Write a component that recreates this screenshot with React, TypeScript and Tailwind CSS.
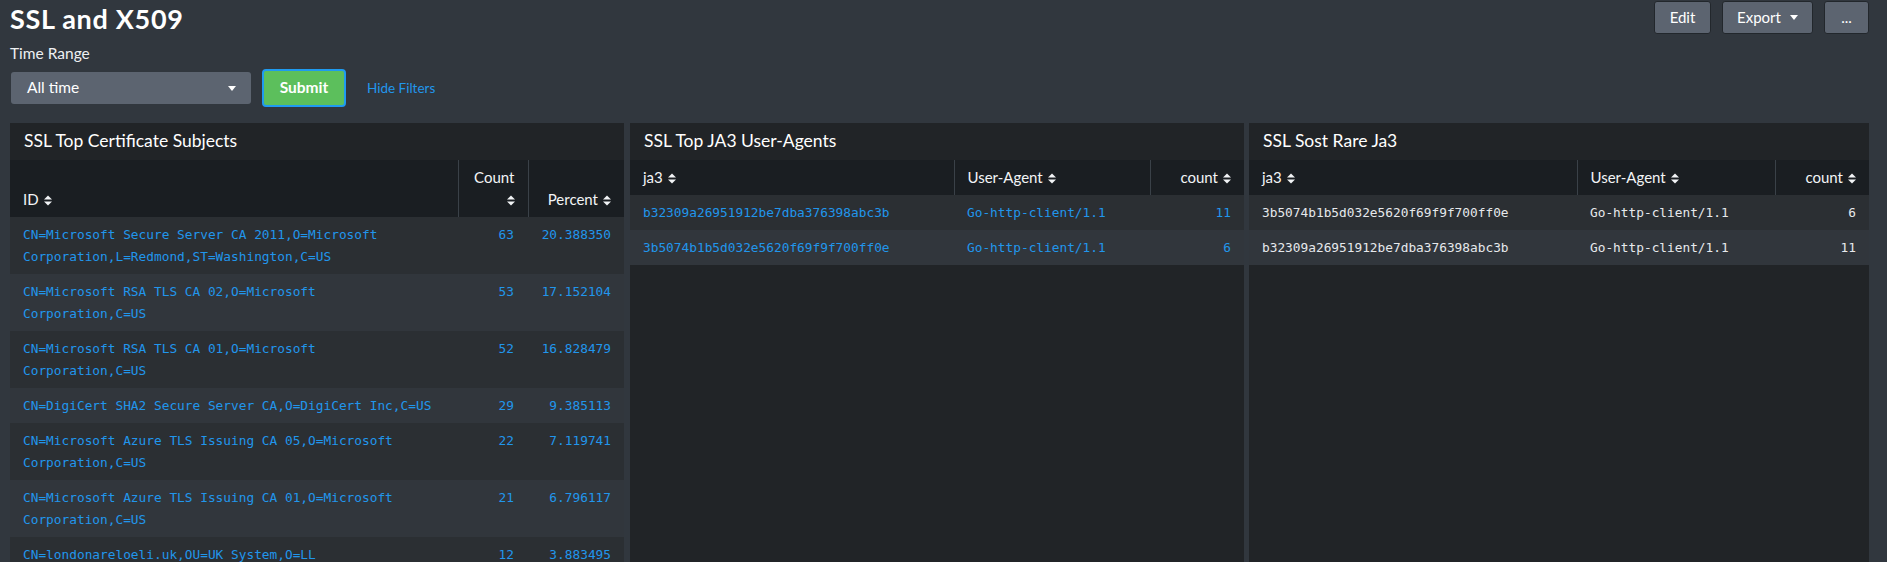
import React from "react";

const SortIcon = () => (
  <svg width="8" height="11" viewBox="0 0 8 11" className="ml-[5px] inline-block align-[-1px]">
    <path d="M0 4.5 L4 0.5 L8 4.5 Z" fill="currentColor" />
    <path d="M0 6.5 L8 6.5 L4 10.5 Z" fill="currentColor" />
  </svg>
);

const Caret = () => (
  <svg width="8" height="5" viewBox="0 0 8 5" className="inline-block">
    <path d="M0 0 L8 0 L4 5 Z" fill="currentColor" />
  </svg>
);

const certRows = [
  ["CN=Microsoft Secure Server CA 2011,O=Microsoft Corporation,L=Redmond,ST=Washington,C=US", "63", "20.388350"],
  ["CN=Microsoft RSA TLS CA 02,O=Microsoft Corporation,C=US", "53", "17.152104"],
  ["CN=Microsoft RSA TLS CA 01,O=Microsoft Corporation,C=US", "52", "16.828479"],
  ["CN=DigiCert SHA2 Secure Server CA,O=DigiCert Inc,C=US", "29", "9.385113"],
  ["CN=Microsoft Azure TLS Issuing CA 05,O=Microsoft Corporation,C=US", "22", "7.119741"],
  ["CN=Microsoft Azure TLS Issuing CA 01,O=Microsoft Corporation,C=US", "21", "6.796117"],
  ["CN=londonareloeli.uk,OU=UK System,O=LL", "12", "3.883495"],
];

const topJa3 = [
  ["b32309a26951912be7dba376398abc3b", "Go-http-client/1.1", "11"],
  ["3b5074b1b5d032e5620f69f9f700ff0e", "Go-http-client/1.1", "6"],
];

const rareJa3 = [
  ["3b5074b1b5d032e5620f69f9f700ff0e", "Go-http-client/1.1", "6"],
  ["b32309a26951912be7dba376398abc3b", "Go-http-client/1.1", "11"],
];

const th = "bg-[#1a1e22] px-[13px] pt-[6px] pb-[7px] align-bottom text-[15px] font-normal leading-[22px] text-[#f2f4f6]";
const td = "px-[13px] pt-[7px] pb-[6px] align-top font-['DejaVu_Sans_Mono',monospace] text-[12.8px] leading-[22px]";

function Panel({ title, className, children }: { title: string; className?: string; children: React.ReactNode }) {
  return (
    <div className={`flex flex-col overflow-hidden bg-[#212427] ${className ?? ""}`}>
      <div className="flex h-[37px] shrink-0 items-center px-[14px] text-[17.5px] text-white">{title}</div>
      {children}
    </div>
  );
}

function Ja3Table({ rows, widths, link }: { rows: string[][]; widths: number[]; link: boolean }) {
  const color = link ? "text-[#2196ec]" : "text-[#e6e9ec]";
  return (
    <table className="w-full table-fixed border-collapse">
      <colgroup>
        <col style={{ width: widths[0] }} />
        <col style={{ width: widths[1] }} />
        <col style={{ width: widths[2] }} />
      </colgroup>
      <thead>
        <tr>
          <th className={`${th} text-left`}>
            ja3<SortIcon />
          </th>
          <th className={`${th} border-l border-[#3a4148] text-left`}>
            User-Agent<SortIcon />
          </th>
          <th className={`${th} border-l border-[#3a4148] text-right`}>
            count<SortIcon />
          </th>
        </tr>
      </thead>
      <tbody>
        {rows.map((r, i) => (
          <tr key={i} className={i % 2 === 0 ? "bg-[#2b2f33]" : "bg-[#31363c]"}>
            <td className={`${td} ${color}`}>{r[0]}</td>
            <td className={`${td} ${color}`}>{r[1]}</td>
            <td className={`${td} ${color} text-right`}>{r[2]}</td>
          </tr>
        ))}
      </tbody>
    </table>
  );
}

export default function App() {
  return (
    <div className="flex h-[562px] flex-col overflow-hidden bg-[#31373e] pl-[10px] pr-[18px] font-['Lato','Open_Sans',sans-serif] text-white">
      <div className="flex items-start justify-between">
        <h1 className="pt-[3px] text-[27px] font-bold leading-[32px] tracking-[0.7px]">SSL and X509</h1>
        <div className="flex gap-[11px] pt-[1px]">
          <button className="h-[33px] w-[57px] rounded-[3px] border border-[#22272c] bg-[#5c6470] text-[15px] text-white">
            Edit
          </button>
          <button className="flex h-[33px] w-[91px] items-center justify-center gap-[9px] rounded-[3px] border border-[#22272c] bg-[#5c6470] text-[15px] text-white">
            Export <Caret />
          </button>
          <button className="h-[33px] w-[45px] rounded-[3px] border border-[#22272c] bg-[#5c6470] text-[15px] leading-none text-white">
            ...
          </button>
        </div>
      </div>

      <div className="mt-[8px] text-[15.5px] leading-[20px] text-[#eef0f2]">Time Range</div>

      <div className="mt-[6px] flex h-[38px] items-center">
        <div className="ml-[1px] flex h-[32px] w-[240px] items-center justify-between rounded-[3px] bg-[#5c6470] pl-[16px] pr-[15px] text-[15.5px] text-white">
          <span>All time</span>
          <Caret />
        </div>
        <button className="ml-[11px] h-[38px] w-[84px] rounded-[4px] border-2 border-[#1f9bf0] bg-[#5cbf5c] text-[15.5px] font-bold text-white">
          Submit
        </button>
        <span className="ml-[21px] text-[13.5px] text-[#2196ec]">Hide Filters</span>
      </div>

      <div className="mt-[16px] flex min-h-0 flex-1">
        <Panel title="SSL Top Certificate Subjects" className="w-[614px] shrink-0">
          <table className="w-full table-fixed border-collapse">
            <colgroup>
              <col style={{ width: 448 }} />
              <col style={{ width: 70 }} />
              <col style={{ width: 96 }} />
            </colgroup>
            <thead>
              <tr>
                <th className={`${th} text-left`}>
                  ID<SortIcon />
                </th>
                <th className={`${th} border-l border-[#3a4148] text-right`}>
                  Count<SortIcon />
                </th>
                <th className={`${th} border-l border-[#3a4148] text-right`}>
                  Percent<SortIcon />
                </th>
              </tr>
            </thead>
            <tbody>
              {certRows.map((r, i) => (
                <tr key={i} className={i % 2 === 0 ? "bg-[#2b2f33]" : "bg-[#31363c]"}>
                  <td className={`${td} text-[#2196ec]`}>{r[0]}</td>
                  <td className={`${td} pr-[14px] text-right text-[#2196ec]`}>{r[1]}</td>
                  <td className={`${td} text-right text-[#2196ec]`}>{r[2]}</td>
                </tr>
              ))}
            </tbody>
          </table>
        </Panel>

        <Panel title="SSL Top JA3 User-Agents" className="ml-[6px] w-[614px] shrink-0">
          <Ja3Table rows={topJa3} widths={[324, 196, 94]} link />
        </Panel>

        <Panel title="SSL Sost Rare Ja3" className="ml-[5px] flex-1">
          <Ja3Table rows={rareJa3} widths={[328, 198, 94]} link={false} />
        </Panel>
      </div>
    </div>
  );
}
